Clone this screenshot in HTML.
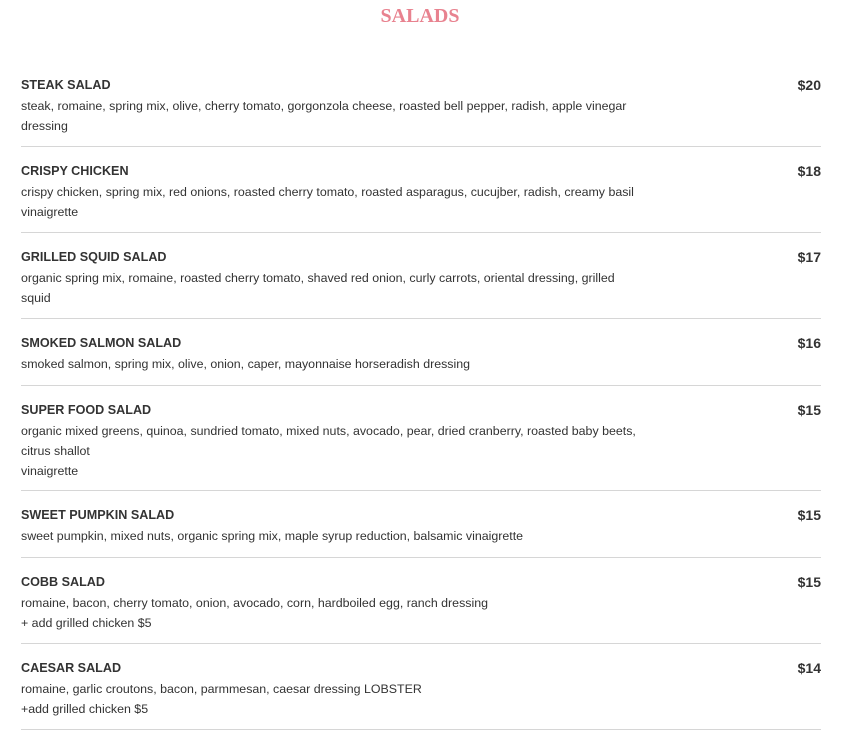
<!DOCTYPE html>
<html><head><meta charset="utf-8"><style>
body{margin:0;width:867px;height:747px;background:#fff;position:relative;font-family:"Liberation Sans",sans-serif;color:#333;overflow:hidden}
h1{position:absolute;top:5px;left:0;width:840px;text-align:center;margin:0;font-family:"Liberation Serif",serif;font-weight:bold;font-size:20px;color:#e8828f;letter-spacing:0px}
.n{position:absolute;left:21px;font-weight:bold;font-size:12.6px;color:#333;white-space:nowrap}
.p{position:absolute;left:790px;width:31px;text-align:right;font-weight:bold;font-size:14px;color:#333}
.d{position:absolute;left:21px;font-size:12.4px;line-height:20px;color:#333;white-space:nowrap}
.l{position:absolute;left:21px;width:800px;height:1px;background:#d6d6d6}
</style></head><body>
<h1>SALADS</h1>

<div class="n" style="top:78px">STEAK SALAD</div><div class="p" style="top:77px">$20</div>
<div class="d" style="top:96px">steak, romaine, spring mix, olive, cherry tomato, gorgonzola cheese, roasted bell pepper, radish, apple vinegar<br>dressing</div>
<div class="l" style="top:146px"></div>

<div class="n" style="top:164px">CRISPY CHICKEN</div><div class="p" style="top:163px">$18</div>
<div class="d" style="top:182px">crispy chicken, spring mix, red onions, roasted cherry tomato, roasted asparagus, cucujber, radish, creamy basil<br>vinaigrette</div>
<div class="l" style="top:232px"></div>

<div class="n" style="top:250px">GRILLED SQUID SALAD</div><div class="p" style="top:249px">$17</div>
<div class="d" style="top:268px">organic spring mix, romaine, roasted cherry tomato, shaved red onion, curly carrots, oriental dressing, grilled<br>squid</div>
<div class="l" style="top:318px"></div>

<div class="n" style="top:336px">SMOKED SALMON SALAD</div><div class="p" style="top:335px">$16</div>
<div class="d" style="top:354px">smoked salmon, spring mix, olive, onion, caper, mayonnaise horseradish dressing</div>
<div class="l" style="top:385px"></div>

<div class="n" style="top:403px">SUPER FOOD SALAD</div><div class="p" style="top:402px">$15</div>
<div class="d" style="top:421px">organic mixed greens, quinoa, sundried tomato, mixed nuts, avocado, pear, dried cranberry, roasted baby beets,<br>citrus shallot<br>vinaigrette</div>
<div class="l" style="top:490px"></div>

<div class="n" style="top:508px">SWEET PUMPKIN SALAD</div><div class="p" style="top:507px">$15</div>
<div class="d" style="top:526px">sweet pumpkin, mixed nuts, organic spring mix, maple syrup reduction, balsamic vinaigrette</div>
<div class="l" style="top:557px"></div>

<div class="n" style="top:575px">COBB SALAD</div><div class="p" style="top:574px">$15</div>
<div class="d" style="top:593px">romaine, bacon, cherry tomato, onion, avocado, corn, hardboiled egg, ranch dressing<br>+ add grilled chicken $5</div>
<div class="l" style="top:643px"></div>

<div class="n" style="top:661px">CAESAR SALAD</div><div class="p" style="top:660px">$14</div>
<div class="d" style="top:679px">romaine, garlic croutons, bacon, parmmesan, caesar dressing LOBSTER<br>+add grilled chicken $5</div>
<div class="l" style="top:729px"></div>
</body></html>
